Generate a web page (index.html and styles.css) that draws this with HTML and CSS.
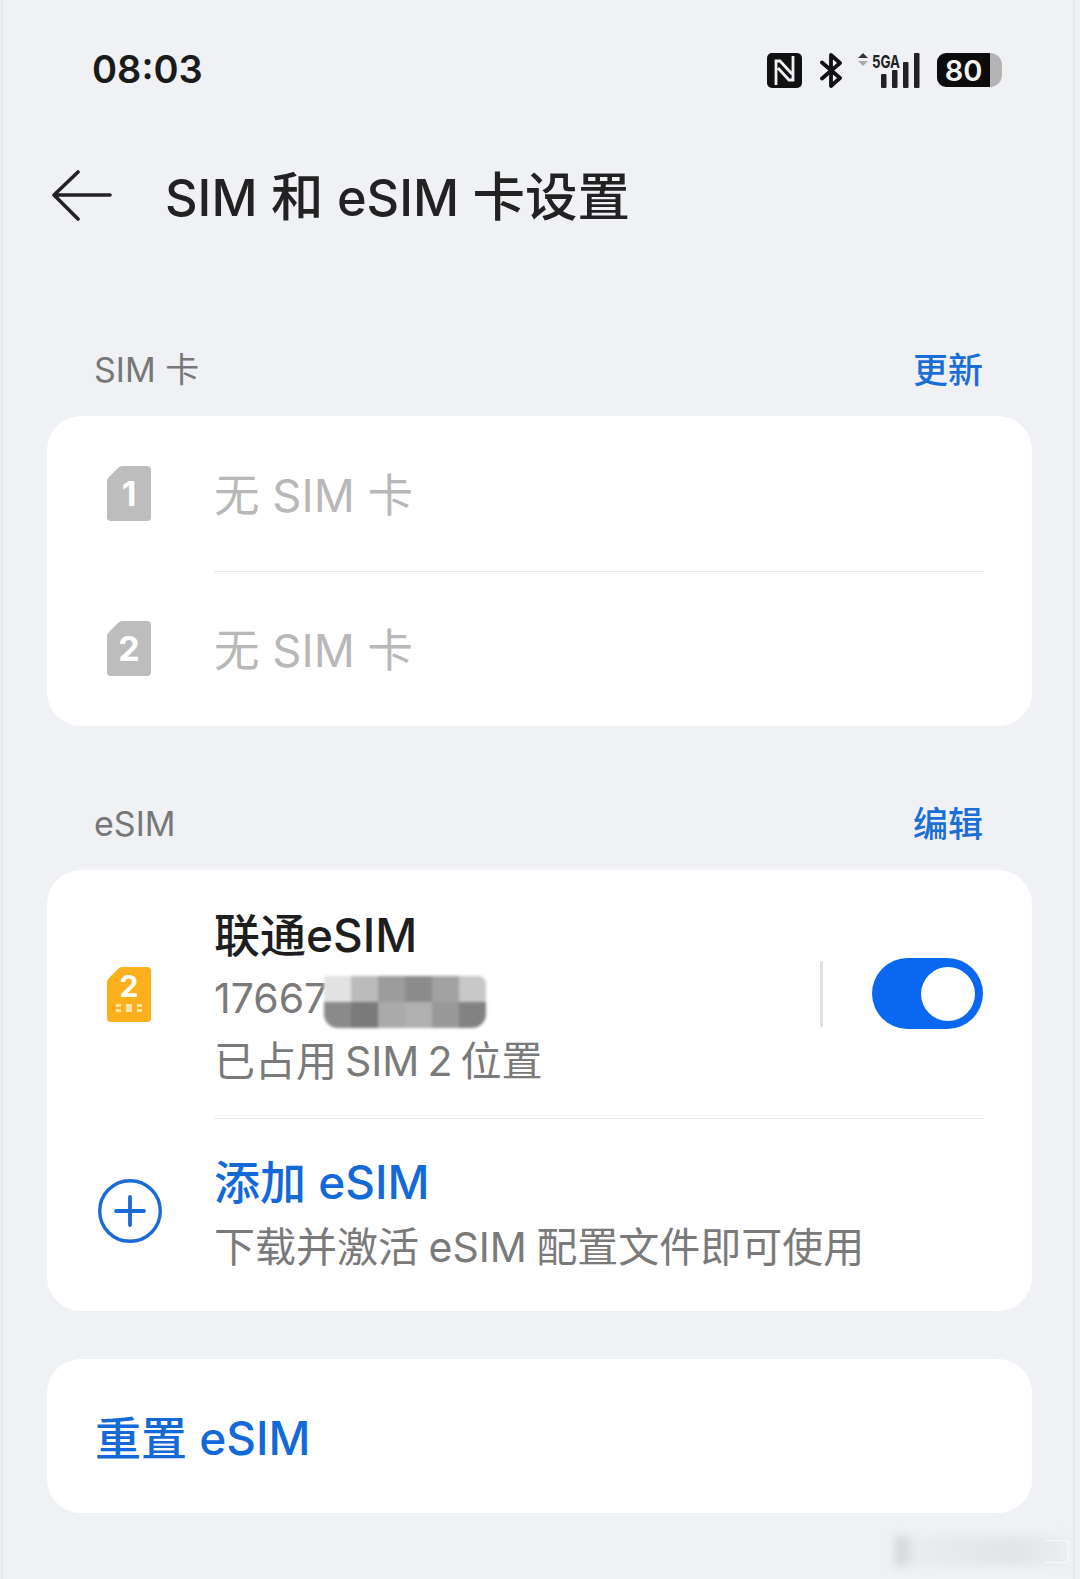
FILE: index.html
```html
<!DOCTYPE html>
<html lang="zh-CN">
<head>
    <meta charset="UTF-8">
    <meta name="viewport" content="width=device-width, initial-scale=1.0">
    <title>SIM 和 eSIM 卡设置</title>
    <link rel="stylesheet" href="styles.css">
</head>
<body>
    <div class="status-bar">
        <span class="time">08:03</span>
        <div class="status-icons">
            <svg class="icon-nfc" width="35" height="35" viewBox="0 0 35 35">
                <rect width="35" height="35" rx="5" fill="#111"/>
                <path d="M9 32V8H13L25 21M26 3V27H22L11 15" fill="none" stroke="#eff1f4" stroke-width="2.800"/>
            </svg>
            <svg class="icon-bt" width="23" height="37" viewBox="0 0 23 37">
                <path d="M2 10.500L20 26L11 34V3L20 11L2 26.500" fill="none" stroke="#111" stroke-width="3.800" stroke-linecap="round" stroke-linejoin="round"/>
            </svg>
            <svg class="icon-signal" width="62" height="37" viewBox="0 0 62 37">
                <path d="M0 6L5 1L10 6Z" fill="#333"/>
                <path d="M0 9L5 14L10 9Z" fill="#aaa"/>
                <text class="signal-text" x="14" y="16" textLength="28" lengthAdjust="spacingAndGlyphs">5GA</text>
                <rect x="23" y="22" width="5.500" height="14" rx="1" fill="#222"/>
                <rect x="34" y="18" width="5.500" height="18" rx="1" fill="#222"/>
                <rect x="45" y="10" width="5.500" height="26" rx="1" fill="#222"/>
                <rect x="56" y="1" width="5.500" height="35" rx="1" fill="#222"/>
            </svg>
            <div class="battery">
                <span class="battery-level">80</span>
                <span class="battery-rest"></span>
            </div>
        </div>
    </div>

    <div class="header">
        <svg class="back" width="62" height="52" viewBox="0 0 62 52">
            <path d="M59 25H3M27 2L3 25L27 49" fill="none" stroke="#222" stroke-width="3.600" stroke-linecap="round" stroke-linejoin="round"/>
        </svg>
        <h1>SIM <span class="cjk">和</span> eSIM <span class="cjk">卡设置</span></h1>
    </div>

    <div class="section-head first">
        <span>SIM 卡</span>
        <a class="link">更新</a>
    </div>
    <div class="card">
        <div class="row row-sim">
            <svg class="sim" width="44" height="55" viewBox="0 0 44 55">
                <path d="M15 0H40Q44 0 44 4V51Q44 55 40 55H4Q0 55 0 51V15Q0 13 2 11L11 2Q13 0 15 0Z" fill="#bdbdbd"/>
                <text class="sim-num" x="22" y="40">1</text>
            </svg>
            <div class="row-text muted">无 SIM 卡</div>
        </div>
        <div class="row row-sim">
            <svg class="sim" width="44" height="55" viewBox="0 0 44 55">
                <path d="M15 0H40Q44 0 44 4V51Q44 55 40 55H4Q0 55 0 51V15Q0 13 2 11L11 2Q13 0 15 0Z" fill="#bdbdbd"/>
                <text class="sim-num" x="22" y="40">2</text>
            </svg>
            <div class="row-text muted">无 SIM 卡</div>
        </div>
    </div>

    <div class="section-head">
        <span class="latin-label">eSIM</span>
        <a class="link">编辑</a>
    </div>
    <div class="card">
        <div class="row row-esim">
            <svg class="sim" width="44" height="55" viewBox="0 0 44 55">
                <path d="M15 0H40Q44 0 44 4V51Q44 55 40 55H4Q0 55 0 51V15Q0 13 2 11L11 2Q13 0 15 0Z" fill="#fbb01c"/>
                <text class="sim-num small" x="22" y="30">2</text>
                <path d="M9 37h5v3h-5zM9 42h5v3h-5zM19 37h6v8h-6zM30 37h5v3h-5zM30 42h5v3h-5z" fill="#ffe3a8"/>
            </svg>
            <div class="row-text">
                <div class="title">联通eSIM</div>
                <div class="sub number">17667<span class="mosaic">
                    <i class="m1"></i><i class="m2"></i><i class="m3"></i><i class="m4"></i><i class="m5"></i><i class="m6"></i>
                    <i class="m7"></i><i class="m8"></i><i class="m9"></i><i class="m10"></i><i class="m11"></i><i class="m12"></i>
                </span></div>
                <div class="sub tight">已占用 SIM 2 位置</div>
            </div>
            <div class="vline"></div>
            <div class="toggle"><div class="knob"></div></div>
        </div>
        <div class="row row-add">
            <svg class="plus" width="64" height="64" viewBox="0 0 64 64">
                <circle cx="32" cy="32" r="30.300" fill="none" stroke="#1a6ad8" stroke-width="3.400"/>
                <path d="M18 32H46M32 18V46" fill="none" stroke="#1a6ad8" stroke-width="3.800" stroke-linecap="round"/>
            </svg>
            <div class="row-text">
                <div class="title blue">添加 eSIM</div>
                <div class="sub">下载并激活 eSIM 配置文件即可使用</div>
            </div>
        </div>
    </div>

    <div class="card reset">
        <span class="title blue">重置 eSIM</span>
    </div>

    <div class="watermark"></div>
    <div class="watermark-box"></div>
</body>
</html>
```

FILE: styles.css
```css
/* Basic styling */
body {
    background-color: #eff1f4;
    font-family: Inter, "Noto Sans CJK SC", sans-serif;
    width: 1080px;
    height: 1579px;
    margin: 0;
    overflow: hidden;
    position: relative;
    color: #222;
}

/* faint lines down both screen edges */
body::before {
    content: "";
    position: absolute;
    top: 0;
    bottom: 0;
    left: 1px;
    right: 5px;
    border-left: 2px solid #e9eaed;
    border-right: 2px solid #e9eaed;
}

.status-bar {
    height: 138px;
    padding: 0 78px 2px 92px;
    display: flex;
    justify-content: space-between;
    align-items: center;
}

.time {
    font-size: 38px;
    font-weight: 600;
    color: #1a1a1a;
}

.status-icons {
    display: flex;
    align-items: center;
    padding-top: 2px;
}

.icon-bt {
    margin-left: 18px;
}

.icon-signal {
    margin-left: 15px;
}

.signal-text {
    font-size: 18px;
    font-weight: 700;
    fill: #222;
}

.battery {
    margin-left: 17px;
    width: 65px;
    height: 34px;
    display: flex;
    border-radius: 9px 12px 12px 9px;
    overflow: hidden;
}

.battery-level {
    width: 53px;
    background: #0c0c0c;
    color: #f4f4f4;
    font-size: 29px;
    font-weight: 600;
    line-height: 36px;
    text-align: center;
}

.battery-rest {
    flex: 1;
    background: #b4b4b4;
}

.header {
    height: 112px;
    padding-left: 51px;
    display: flex;
    align-items: center;
}

.header h1 {
    margin: 0 0 6px 52px;
    font-size: 50.500px;
    font-weight: 500;
    color: #222;
}

.cjk {
    font-size: 52.500px;
}

.section-head {
    height: 64px;
    margin-top: 66px;
    margin-bottom: 14px;
    padding: 0 97px 6px 94px;
    box-sizing: border-box;
    display: flex;
    justify-content: space-between;
    align-items: center;
    font-size: 34px;
    color: #777;
}

.section-head.first {
    margin-top: 86px;
}

.latin-label {
    margin-top: 4px;
}

.link {
    color: #1a6fd6;
    font-size: 35px;
    font-weight: 500;
}

.card {
    margin: 0 48px 0 47px;
    background: white;
    border-radius: 34px;
}

.row {
    display: flex;
    align-items: center;
    padding-left: 60px;
}

.row-sim {
    height: 155px;
}

.row-text {
    margin-left: 63px;
    flex: 1;
}

.muted {
    color: #b8b8b8;
    font-size: 45.500px;
    padding-bottom: 4px;
}

.row-sim + .row-sim::before,
.row-add::before {
    content: "";
    position: absolute;
    left: 214px;
    width: 770px;
    height: 1px;
    background: #e9e9e9;
}

.row-sim + .row-sim::before {
    top: 571px;
}

.row-add::before {
    top: 1118px;
}

.row-esim {
    height: 248px;
    padding-right: 49px;
}

.row-esim .row-text {
    padding-top: 7px;
}

.title {
    font-size: 46px;
    font-weight: 500;
    line-height: 64px;
    color: #1e1e1e;
}

.blue {
    color: #1469d8;
}

.sub {
    font-size: 41px;
    line-height: 63px;
    word-spacing: -2px;
    color: #7a7a7a;
}

.sub.tight {
    word-spacing: -3.500px;
}

.number {
    display: flex;
    align-items: center;
}

.mosaic {
    width: 162px;
    height: 52px;
    margin: 8px 0 0 -3px;
    display: grid;
    grid-template-columns: repeat(6, 1fr);
    grid-template-rows: repeat(2, 1fr);
    filter: blur(1.500px);
    border-radius: 0 8px 14px 14px;
    overflow: hidden;
}

.m1 { background: #e2e2e2; }
.m2 { background: #bbb; }
.m3 { background: #9c9c9c; }
.m4 { background: #8c8c8c; }
.m5 { background: #a2a2a2; }
.m6 { background: #c8c8c8; }
.m7 { background: #8a8a8a; }
.m8 { background: #7a7a7a; }
.m9 { background: #aaa; }
.m10 { background: #b0b0b0; }
.m11 { background: #999; }
.m12 { background: #828282; }

.sim-num {
    font-size: 34px;
    font-weight: 700;
    fill: white;
    text-anchor: middle;
}

.sim-num.small {
    font-size: 30px;
}

.vline {
    width: 3px;
    height: 66px;
    background: #e2e2e2;
    margin-right: 49px;
}

.toggle {
    width: 111px;
    height: 71px;
    margin-top: -1px;
    background: #0a68f0;
    border-radius: 36px;
    display: flex;
    align-items: center;
    justify-content: flex-end;
    padding-right: 8px;
    box-sizing: border-box;
}

.knob {
    width: 54px;
    height: 54px;
    border-radius: 50%;
    background: white;
}

.row-add {
    height: 193px;
    padding-left: 51px;
}

.row-add .plus {
    margin-bottom: 8px;
}

.row-add .row-text {
    margin-left: 52px;
}

.row-add .sub {
    margin-top: 2px;
}

.reset {
    margin-top: 48px;
    height: 154px;
    padding: 4px 0 0 48px;
    box-sizing: border-box;
    display: flex;
    align-items: center;
}

/* faint blurred watermark bottom right */
.watermark {
    position: absolute;
    left: 895px;
    top: 1536px;
    width: 172px;
    height: 30px;
    background: linear-gradient(90deg, #d4d6d9, #d8dadd 6%, #eaecef 12%, #e6e8eb 40%, #e2e4e7 70%, #ebedf0);
    filter: blur(4px);
}

.watermark-box {
    position: absolute;
    left: 1045px;
    top: 1540px;
    width: 23px;
    height: 21px;
    border: 1px solid #f8f9fa;
    border-left: none;
    border-radius: 0 3px 3px 0;
}
```
